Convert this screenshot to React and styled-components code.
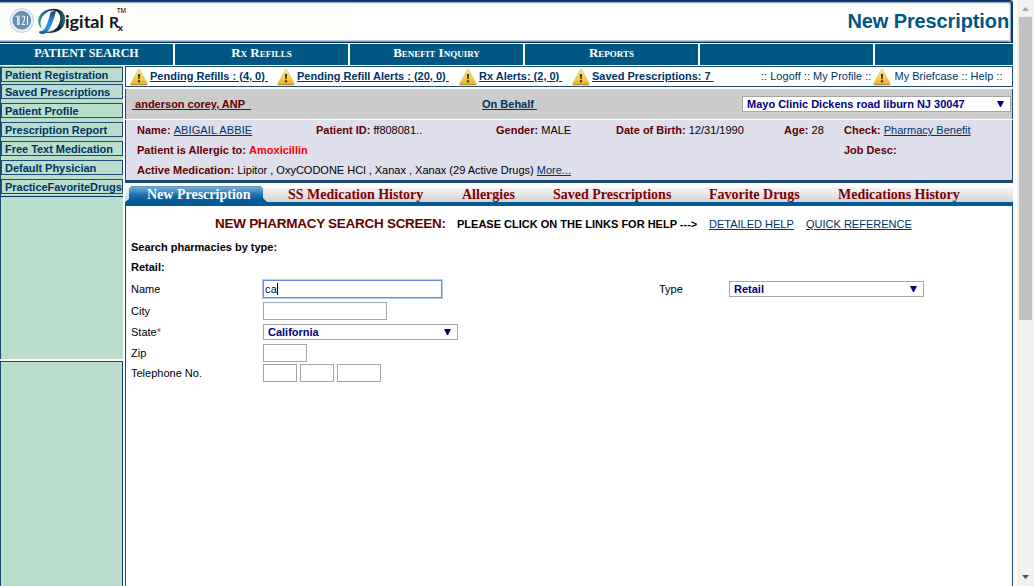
import React from "react";
import styled, { createGlobalStyle } from "styled-components";

const GlobalStyle = createGlobalStyle`
  * { box-sizing: border-box; }
  body { margin: 0; background: #fff; overflow: hidden; font-family: "Liberation Sans", Arial, sans-serif; font-size: 11px; color: #000; }
`;

const Screen = styled.div`
  display: flex;
  width: 1034px;
  height: 586px;
  overflow: hidden;
`;
const Page = styled.div`
  width: 1013px;
  margin-right: 4px;
  display: flex;
  flex-direction: column;
`;
const Header = styled.header`
  height: 43px;
  flex: none;
  display: flex;
  justify-content: space-between;
  align-items: flex-start;
  border-top: 1px solid #0c3a6b;
  border-bottom: 1px solid #003366;
  border-right: 1px solid #003366;
  border-top-right-radius: 3px;
  background: linear-gradient(90deg, #fcfefa 0 350px, #fff 350px);
  box-shadow: inset -1px 1px 0 #12396b, inset -2px 2px 0 #a3afc2, inset -3px 3px 1px #dfe3ea, inset 0 -1px 0 #7a93b1, inset 0 -2px 0 #c5cdd8;
`;
const Title = styled.h1`
  margin: 8px 3px 0 0;
  font-size: 20px;
  line-height: 24px;
  font-weight: bold;
  color: #005783;
  letter-spacing: -0.12px;
`;
const Nav = styled.nav`
  margin-top: 1px;
  height: 21px;
  flex: none;
  display: grid;
  grid-template-columns: repeat(5, 173px) 1fr;
  gap: 2px;
`;
const NavCell = styled.div`
  background: #005783;
  color: #fff;
  text-align: center;
  font: bold ${(p) => (p.$caps ? "12px" : "13px")}/18px "Liberation Serif", "Times New Roman", serif;
  font-variant: ${(p) => (p.$caps ? "normal" : "small-caps")};
`;
const Body = styled.div`
  display: flex;
  flex: 1;
  min-height: 0;
  padding-top: 1px;
`;
const Sidebar = styled.aside`
  width: 123px;
  margin-right: 2px;
  display: flex;
  flex-direction: column;
  gap: 2px;
`;
const MenuPanel = styled.div`
  height: 293px;
  background: #bbddcc;
  border-left: 1px solid #1a4972;
  border-top: 1px solid #8fb5ae;
  display: flex;
  flex-direction: column;
`;
const MenuItem = styled.div`
  height: 15px;
  margin-bottom: ${(p) => p.$gap}px;
  flex: none;
  border: 1px solid #1f4b74;
  padding-left: 3px;
  font-weight: bold;
  line-height: 14px;
  color: #003366;
  white-space: nowrap;
  letter-spacing: -0.03px;
`;
const MenuEnd = styled.div`
  height: 1px;
  background: #003366;
`;
const LowerPanel = styled.div`
  flex: 1;
  background: #bbddcc;
  border: 1px solid #1a4972;
  border-bottom: 0;
`;
const Main = styled.main`
  flex: 1;
  display: flex;
  flex-direction: column;
`;
const AlertBar = styled.div`
  height: 21px;
  flex: none;
  border: 1px solid #1a4972;
  display: flex;
  align-items: center;
  padding-left: 4px;
  color: #003366;
  margin-bottom: 2px;
  white-space: pre;
`;
const AlertLink = styled.span`
  width: ${(p) => p.$w}px;
  display: flex;
  align-items: center;
  gap: 2px;
  line-height: 16px;
  & u { font-weight: bold; margin-top: -2px; text-underline-offset: 1px; }
`;
const TopLink = styled.span`
  margin: -2px 2px 0 0;
  letter-spacing: 0.02px;
`;
const AccountBar = styled.div`
  height: 30px;
  flex: none;
  background: #cccccc;
  border: solid #1a4972;
  border-width: 0 1px;
  display: grid;
  grid-template-columns: 350px 260px 1fr;
  align-items: center;
  padding-left: 6px;
  margin-bottom: 1px;
  color: #660000;
  white-space: pre;
`;
const Linked = styled.u`
  color: ${(p) => p.$color || "#003366"};
  font-weight: ${(p) => (p.$bold ? "bold" : "normal")};
  letter-spacing: ${(p) => p.$ls || 0}px;
  text-decoration-color: #003366;
  text-underline-offset: 1px;
`;
const PatientPanel = styled.div`
  height: 63px;
  flex: none;
  background: #dedeed;
  border: solid #1a4972;
  border-width: 0 1px 3px;
  padding-left: 11px;
`;
const PatientRow = styled.div`
  height: 20px;
  line-height: 20px;
  display: grid;
  grid-template-columns: ${(p) => p.$cols || "707px auto"};
  white-space: pre;
`;
const Datum = styled.span`
  & b { color: #660000; }
`;
const Allergy = styled.strong`
  color: #ff0000;
`;
const TabBar = styled.div`
  height: 23px;
  flex: none;
  padding-top: 3px;
  border-bottom: 4px solid #005a96;
  background: linear-gradient(#fff 0 4px, #f2f2f2 5px, #efefef 8px, #d2d2d2 19px);
  display: grid;
  grid-template-columns: 163px 174px 91px 156px 129px 1fr;
  font: bold 14px/17px "Liberation Serif", "Times New Roman", serif;
  color: #800000;
  white-space: nowrap;
`;
const Tab = styled.div`
  white-space: nowrap;
`;
const ActiveTab = styled(Tab)`
  width: 143px;
  height: 16px;
  padding-left: 22px;
  color: #fff;
  background: linear-gradient(#3c86bb 0, #75abd2 1px, #4c92c5 5px, #1c70ad 9px, #005a96 15px);
  clip-path: polygon(4px 3px, 5px 1px, 7px 0, 135px 0, 137px 1px, 138px 3px, 138px 12px, 142px 16px, 0 16px, 4px 13px);
`;
const Content = styled.section`
  flex: 1;
  border: solid #1a4972;
  border-width: 0 1px;
  padding: 7px 0 0 5px;
`;
const Heading = styled.div`
  height: 24px;
  line-height: 22px;
  display: flex;
  padding-left: 84px;
  white-space: pre;
`;
const HeadTitle = styled.span`
  width: 242px;
  font-size: 13.5px;
  font-weight: bold;
  line-height: 21px;
  color: #660000;
  letter-spacing: -0.28px;
`;
const HeadHint = styled.b`
  width: 252px;
`;
const HelpLink = styled.span`
  width: 97px;
`;
const Section = styled.div`
  height: 20px;
  line-height: 20px;
  font-weight: bold;
`;
const FormRow = styled.div`
  height: ${(p) => p.$h}px;
  display: grid;
  grid-template-columns: 132px 396px 70px auto;
  align-items: center;
`;
const Label = styled.label`
  & i { font-style: normal; color: #c03030; }
`;
const Fields = styled.div`
  display: flex;
  gap: 3px;
`;
const Field = styled.div`
  width: ${(p) => p.$w}px;
  height: 18px;
  padding-left: 1px;
  line-height: 16px;
  color: #000066;
  background: #fff;
  display: flex;
  align-items: center;
  border: 1px solid ${(p) => (p.$focus ? "#5f8edb" : "#a6a6a6")};
  box-shadow: ${(p) => (p.$focus ? "0 0 0 1px #b3cdf5" : "none")};
  letter-spacing: 0.3px;
`;
const Caret = styled.span`
  width: 1px;
  height: 12px;
  background: #000;
`;
const SelectBox = styled.div`
  width: ${(p) => p.$w}px;
  height: 16px;
  border: 1px solid #a6a6a6;
  background: #fff;
  color: #000080;
  font-weight: bold;
  line-height: 14px;
  padding: 0 6px 0 4px;
  display: flex;
  justify-content: space-between;
  align-items: center;
  white-space: nowrap;
`;
const Scrollbar = styled.div`
  width: 17px;
  background: #f1f1f1;
  display: flex;
  flex-direction: column;
  align-items: center;
`;
const ScrollArrow = styled.svg`
  width: 17px;
  height: 17px;
  flex: none;
`;
const ScrollThumb = styled.div`
  width: 13px;
  height: 303px;
  background: #c1c1c1;
  margin-bottom: auto;
`;
const WarningIcon = styled.svg`
  width: 18px;
  height: 18px;
  flex: none;
`;

const Warning = () => (
  <WarningIcon viewBox="0 0 18 18">
    <defs>
      <linearGradient id="amber" x1="0" y1="0" x2="0" y2="1">
        <stop offset="0" stopColor="#fff09a" />
        <stop offset="0.5" stopColor="#f8d34a" />
        <stop offset="1" stopColor="#e8b02a" />
      </linearGradient>
    </defs>
    <path d="M8.6 1.2Q9 .6 9.5 1.2L17.2 15.8Q17.5 17 16.5 17H1.2Q.2 17 .7 15.8Z" fill="url(#amber)" stroke="#d9b258" strokeWidth=".6" />
    <path d="M1.3 16.500h15.200" stroke="#b5852a" />
    <path d="M7.800 6h2.400l-.5 5.200H8.300z" fill="#4a3a18" />
    <circle cx="9" cy="13.300" r="1.200" fill="#4a3a18" />
  </WarningIcon>
);

const DownMark = () => (
  <svg width="7" height="6" viewBox="0 0 7 6">
    <path d="M0 0H7L4 6H3Z" fill="#000080" />
  </svg>
);

const Select = ({ children, ...rest }) => (
  <SelectBox {...rest}>
    {children}
    <DownMark />
  </SelectBox>
);

const Logo = () => (
  <svg width="135" height="39" viewBox="0 1 135 39">
    <defs>
      <linearGradient id="swirl" x1="0" y1="0" x2="1" y2="0">
        <stop offset="0" stopColor="#2c9d9b" />
        <stop offset="0.35" stopColor="#164769" />
        <stop offset="0.75" stopColor="#101d38" />
        <stop offset="1" stopColor="#2b7f7a" />
      </linearGradient>
      <linearGradient id="stem" x1="0" y1="0" x2="0" y2="1">
        <stop offset="0" stopColor="#16365f" />
        <stop offset="0.4" stopColor="#1f83d8" />
        <stop offset="0.75" stopColor="#2a9be6" />
        <stop offset="1" stopColor="#174584" />
      </linearGradient>
    </defs>
    <circle cx="21.800" cy="20.500" r="12" fill="#e4edf8" stroke="#b8ccea" strokeWidth=".8" />
    <circle cx="21.800" cy="20.300" r="8.700" fill="#6792b1" stroke="#527c9f" />
    <path d="M15.500 16.500q2.200-1 2.200 1.500v7M19 15.500v9.500M22.200 17.500q2-3 2.500.2 0 2.800-2.500 6.800h3M27.500 16v9" fill="none" stroke="#eef5fb" strokeWidth="1.100" />
    <path d="M42 28.500C36 24.500 37.500 15 44 11.300C50 7.800 59.500 7.600 63.300 13C67.300 19 65 27.800 58 31C53.500 33.200 48 33.500 43.500 32C49 32 53.500 31 56.500 28C60.500 23.500 61.500 17 58.800 13.300C55.500 9.300 49.500 10 45.500 13.200C40.800 17 39 23.500 42 28.500Z" fill="url(#swirl)" />
    <path d="M50.800 12L56 10.500C54.500 17 52.500 24 49.500 29C47 33.300 43.500 35 39.800 33.600C38.200 32.500 39.500 30.500 41.300 31.300C46 30.500 49 18 50.800 12Z" fill="url(#stem)" />
    <text fontFamily="Lato, sans-serif" fontWeight="bold" fontSize="16.500" fill="#111">
      <tspan x="65" y="28" textLength="39" lengthAdjust="spacingAndGlyphs">igital</tspan>
      <tspan x="109" y="28" fontSize="15.500" fontWeight="bold">R</tspan>
      <tspan x="117.800" y="31" fontSize="10">x</tspan>
    </text>
    <text x="117" y="12.500" fontFamily="Open Sans, sans-serif" fontSize="6.500" fontWeight="600" fill="#222" textLength="9" lengthAdjust="spacingAndGlyphs">TM</text>
  </svg>
);

const menu = [
  ["Patient Registration", 2],
  ["Saved Prescriptions", 4],
  ["Patient Profile", 4],
  ["Prescription Report", 4],
  ["Free Text Medication", 4],
  ["Default Physician", 4],
  ["PracticeFavoriteDrugs", 2],
];
const alerts = [
  ["Pending Refills : (4, 0) ", 147],
  ["Pending Refill Alerts : (20, 0) ", 182],
  ["Rx Alerts: (2, 0) ", 113],
  ["Saved Prescriptions: 7 ", 189],
];

export default function App() {
  return (
    <Screen>
      <GlobalStyle />
      <Page>
        <Header>
          <Logo />
          <Title>New Prescription</Title>
        </Header>
        <Nav>
          <NavCell $caps>PATIENT SEARCH</NavCell>
          <NavCell>Rx Refills</NavCell>
          <NavCell>Benefit Inquiry</NavCell>
          <NavCell>Reports</NavCell>
          <NavCell />
          <NavCell />
        </Nav>
        <Body>
          <Sidebar>
            <MenuPanel>
              {menu.map(([name, gap]) => (
                <MenuItem key={name} $gap={gap}>{name}</MenuItem>
              ))}
              <MenuEnd />
            </MenuPanel>
            <LowerPanel />
          </Sidebar>
          <Main>
            <AlertBar>
              {alerts.map(([text, w]) => (
                <AlertLink key={text} $w={w}><Warning /><u>{text}</u></AlertLink>
              ))}
              <TopLink>:: Logoff :: My Profile ::</TopLink>
              <Warning />
              <TopLink>{" My Briefcase :: Help ::"}</TopLink>
            </AlertBar>
            <AccountBar>
              <Linked $bold $color="#660000">{" anderson corey, ANP  "}</Linked>
              <Linked $bold>{"On Behalf "}</Linked>
              <Select $w={269}>Mayo Clinic Dickens road liburn NJ 30047</Select>
            </AccountBar>
            <PatientPanel>
              <PatientRow $cols="179px 180px 120px 168px 60px auto">
                <Datum><b>Name:</b> <Linked $ls={0.1}>ABIGAIL ABBIE</Linked></Datum>
                <Datum><b>Patient ID:</b> ff808081..</Datum>
                <Datum><b>Gender:</b> MALE</Datum>
                <Datum><b>Date of Birth:</b> 12/31/1990</Datum>
                <Datum><b>Age:</b> 28</Datum>
                <Datum><b>Check:</b> <Linked>Pharmacy Benefit</Linked></Datum>
              </PatientRow>
              <PatientRow>
                <Datum><b>Patient is Allergic to:</b> <Allergy>Amoxicillin</Allergy></Datum>
                <Datum><b>Job Desc:</b></Datum>
              </PatientRow>
              <PatientRow>
                <Datum><b>Active Medication:</b> Lipitor , OxyCODONE HCl , Xanax , Xanax (29 Active Drugs) <Linked>More...</Linked></Datum>
              </PatientRow>
            </PatientPanel>
            <TabBar>
              <ActiveTab>New Prescription</ActiveTab>
              <Tab>SS Medication History</Tab>
              <Tab>Allergies</Tab>
              <Tab>Saved Prescriptions</Tab>
              <Tab>Favorite Drugs</Tab>
              <Tab>Medications History</Tab>
            </TabBar>
            <Content>
              <Heading>
                <HeadTitle>NEW PHARMACY SEARCH SCREEN:</HeadTitle>
                <HeadHint>{"PLEASE CLICK ON THE LINKS FOR HELP --->"}</HeadHint>
                <HelpLink><Linked>DETAILED HELP</Linked></HelpLink>
                <Linked>QUICK REFERENCE</Linked>
              </Heading>
              <Section>Search pharmacies by type:</Section>
              <Section>Retail:</Section>
              <FormRow $h={24}>
                <Label>Name</Label>
                <Field $w={179} $focus>ca<Caret /></Field>
                <Label>Type</Label>
                <Select $w={195}>Retail</Select>
              </FormRow>
              <FormRow $h={20}>
                <Label>City</Label>
                <Field $w={124} />
              </FormRow>
              <FormRow $h={22}>
                <Label>State<i>*</i></Label>
                <Select $w={195}>California</Select>
              </FormRow>
              <FormRow $h={20}>
                <Label>Zip</Label>
                <Field $w={44} />
              </FormRow>
              <FormRow $h={20}>
                <Label>Telephone No.</Label>
                <Fields>
                  <Field $w={34} />
                  <Field $w={34} />
                  <Field $w={44} />
                </Fields>
              </FormRow>
            </Content>
          </Main>
        </Body>
      </Page>
      <Scrollbar>
        <ScrollArrow viewBox="0 0 17 17"><path d="M5 11L8.500 7L12 11Z" fill="#a3a3a3" /></ScrollArrow>
        <ScrollThumb />
        <ScrollArrow viewBox="0 0 17 17"><path d="M5 6L8.500 10L12 6Z" fill="#505050" /></ScrollArrow>
      </Scrollbar>
    </Screen>
  );
}
